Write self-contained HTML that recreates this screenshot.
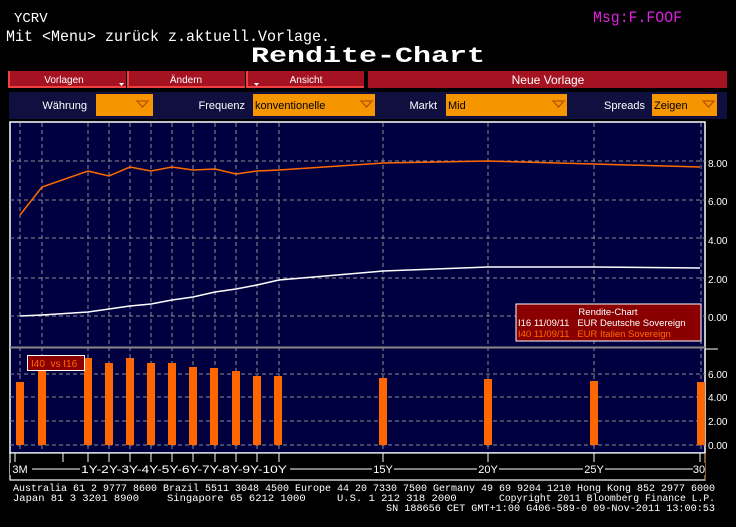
<!DOCTYPE html>
<html><head><meta charset="utf-8"><style>
body{margin:0;background:#000;width:736px;height:527px;overflow:hidden;font-family:"Liberation Sans",sans-serif}
svg{display:block}
</style></head><body>
<svg width="736" height="527" xmlns="http://www.w3.org/2000/svg">
<rect width="736" height="527" fill="#000"/>
<g font-family="Liberation Mono, monospace" font-size="16" fill="#fff">
<text x="14" y="22" font-size="14">YCRV</text>
<text x="6" y="41" textLength="324" lengthAdjust="spacingAndGlyphs">Mit &lt;Menu&gt; zurück z.aktuell.Vorlage.</text>
<text x="593" y="22" fill="#e020e0" textLength="89" lengthAdjust="spacingAndGlyphs">Msg:F.FOOF</text>
<text x="251" y="62" font-size="22" font-weight="bold" textLength="234" lengthAdjust="spacingAndGlyphs">Rendite-Chart</text>
</g>
<!-- buttons -->
<g font-size="10" fill="#fff" text-anchor="middle">
<rect x="9" y="71" width="117" height="16" fill="#a51222"/><path d="M9,71 V87 H126" stroke="#f04040" stroke-width="2" fill="none"/>
<text x="64" y="83">Vorlagen</text><path d="M119,83 h5 l-2.5,3z" fill="#fff"/>
<rect x="128" y="71" width="117" height="16" fill="#a51222"/><path d="M128,71 V87 H245" stroke="#f04040" stroke-width="2" fill="none"/>
<text x="186" y="83">Ändern</text>
<rect x="247" y="71" width="117" height="16" fill="#a51222"/><path d="M247,71 V87 H364" stroke="#f04040" stroke-width="2" fill="none"/>
<text x="306" y="83">Ansicht</text><path d="M254,83 h5 l-2.5,3z" fill="#fff"/>
<rect x="368" y="71" width="359" height="17" fill="#a51222"/>
<text x="548" y="84" font-size="12">Neue Vorlage</text>
</g>
<!-- params -->
<rect x="9" y="92" width="718" height="27" fill="#101040"/>
<g font-size="11" fill="#fff">
<text x="87" y="109" text-anchor="end">Währung</text>
<rect x="96" y="94" width="57" height="22" fill="#f59500"/>
<text x="245" y="109" text-anchor="end">Frequenz</text>
<rect x="253" y="94" width="122" height="22" fill="#f59500"/>
<text x="255" y="109" fill="#000">konventionelle</text>
<text x="437" y="109" text-anchor="end">Markt</text>
<rect x="446" y="94" width="121" height="22" fill="#f59500"/>
<text x="448" y="109" fill="#000">Mid</text>
<text x="645" y="109" text-anchor="end">Spreads</text>
<rect x="652" y="94" width="65" height="22" fill="#f59500"/>
<text x="654" y="109" fill="#000">Zeigen</text>
</g>
<g fill="none" stroke="#c05000" stroke-width="1.3">
<path d="M137,101 h11 l-5.5,6z"/><path d="M361,101 h11 l-5.5,6z"/><path d="M553,101 h11 l-5.5,6z"/><path d="M703,101 h11 l-5.5,6z"/>
</g>
<!-- chart -->
<rect x="10" y="122" width="695" height="331" fill="#000040"/>
<rect x="10" y="122" width="695" height="331" fill="none" stroke="#fff" stroke-width="1.5"/>
<line x1="10" y1="347.5" x2="705" y2="347.5" stroke="#888" stroke-width="2"/>
<g stroke="#8c8c8c" stroke-dasharray="4,3" stroke-width="1">
<path d="M20,123V453M42,123V453M88,123V453M109,123V453M130,123V453M151,123V453M172,123V453M193,123V453M215,123V453M236,123V453M257,123V453M279,123V453M383,123V453M488,123V453M594,123V453M701,123V453"/>
<path d="M10,161H705M10,200H705M10,238H705M10,278H705M10,316H705"/>
<path d="M10,374H705M10,397H705M10,421H705M10,445H705"/>
</g>
<polyline fill="none" stroke="#ff6a00" stroke-width="1.5" points="20,215 42,187 88,171 109,176 130,167 151,171 172,167 193,170 215,169 236,174 257,171 279,170 383,163 488,161 594,164 700,167"/>
<polyline fill="none" stroke="#fff" stroke-width="1.5" points="20,316 42,315 88,312 109,309 130,306 151,304 172,300 193,297 215,292 236,289 257,285 279,280 383,271 488,267 594,267 700,268"/>
<g fill="#ff6600">
<rect x="16" y="382" width="8" height="63"/><rect x="38" y="370" width="8" height="75"/>
<rect x="84" y="358" width="8" height="87"/><rect x="105" y="363" width="8" height="82"/>
<rect x="126" y="358" width="8" height="87"/><rect x="147" y="363" width="8" height="82"/>
<rect x="168" y="363" width="8" height="82"/><rect x="189" y="367" width="8" height="78"/>
<rect x="210" y="368" width="8" height="77"/><rect x="232" y="371" width="8" height="74"/>
<rect x="253" y="376" width="8" height="69"/><rect x="274" y="376" width="8" height="69"/>
<rect x="379" y="378" width="8" height="67"/><rect x="484" y="379" width="8" height="66"/>
<rect x="590" y="381" width="8" height="64"/><rect x="697" y="382" width="8" height="63"/>
</g>
<rect x="27.5" y="355.5" width="57" height="15" fill="#8a0000" stroke="#fff"/>
<text x="31" y="367" font-size="10" fill="#ff6a00">I40 &#160;vs I16</text>
<rect x="516" y="304" width="185" height="37" fill="#8a0000" stroke="#fff"/>
<g font-size="9.5">
<text x="608" y="315" fill="#fff" text-anchor="middle">Rendite-Chart</text>
<text x="518" y="326" fill="#fff">I16 11/09/11 &#160;&#160;EUR Deutsche Sovereign</text>
<text x="518" y="337" fill="#ff6a00">I40 11/09/11 &#160;&#160;EUR Italien Sovereign</text>
</g>
<g font-size="10" fill="#fff">
<text x="708" y="167">8.00</text><text x="708" y="205">6.00</text><text x="708" y="244">4.00</text><text x="708" y="283">2.00</text><text x="708" y="321">0.00</text>
<text x="708" y="378">6.00</text><text x="708" y="401">4.00</text><text x="708" y="425">2.00</text><text x="708" y="449">0.00</text>
</g>
<line x1="705" y1="349" x2="718" y2="349" stroke="#fff"/>
<!-- axis band -->
<rect x="10" y="453" width="695" height="27" fill="#000" stroke="#fff" stroke-width="1.2"/>
<line x1="10" y1="469" x2="700" y2="469" stroke="#fff"/>
<g stroke="#fff"><path d="M15,453V462M63,453V462M88,453V462M109,453V462M130,453V462M151,453V462M172,453V462M193,453V462M215,453V462M236,453V462M257,453V462M279,453V462M383,453V462M488,453V462M594,453V462M700,453V462"/></g>
<line x1="705" y1="453" x2="705" y2="480" stroke="#c08040"/>
<g font-size="11" fill="#fff" text-anchor="middle">
<g fill="#000"><rect x="10" y="463" width="22" height="12"/><rect x="372" y="463" width="22" height="12"/><rect x="477" y="463" width="22" height="12"/><rect x="583" y="463" width="22" height="12"/><rect x="693" y="463" width="12" height="12"/></g>
<text x="20" y="473">3M</text>
<rect x="80" y="463" width="210" height="12" fill="#000"/>
<text x="184" y="473" textLength="206" lengthAdjust="spacingAndGlyphs">1Y-2Y-3Y-4Y-5Y-6Y-7Y-8Y-9Y-10Y</text>
<text x="383" y="473">15Y</text><text x="488" y="473">20Y</text><text x="594" y="473">25Y</text><text x="699" y="473">30</text>
</g>
<g font-family="Liberation Mono, monospace" font-size="10.5" fill="#fff">
<text x="13" y="491" textLength="702" lengthAdjust="spacingAndGlyphs">Australia 61 2 9777 8600 Brazil 5511 3048 4500 Europe 44 20 7330 7500 Germany 49 69 9204 1210 Hong Kong 852 2977 6000</text>
<text x="13" y="501">Japan 81 3 3201 8900</text>
<text x="167" y="501">Singapore 65 6212 1000</text>
<text x="337" y="501">U.S. 1 212 318 2000</text>
<text x="499" y="501" textLength="216" lengthAdjust="spacingAndGlyphs">Copyright 2011 Bloomberg Finance L.P.</text>
<text x="386" y="511" textLength="329" lengthAdjust="spacingAndGlyphs">SN 188656 CET  GMT+1:00 G406-589-0 09-Nov-2011 13:00:53</text>
</g>
</svg>
</body></html>
